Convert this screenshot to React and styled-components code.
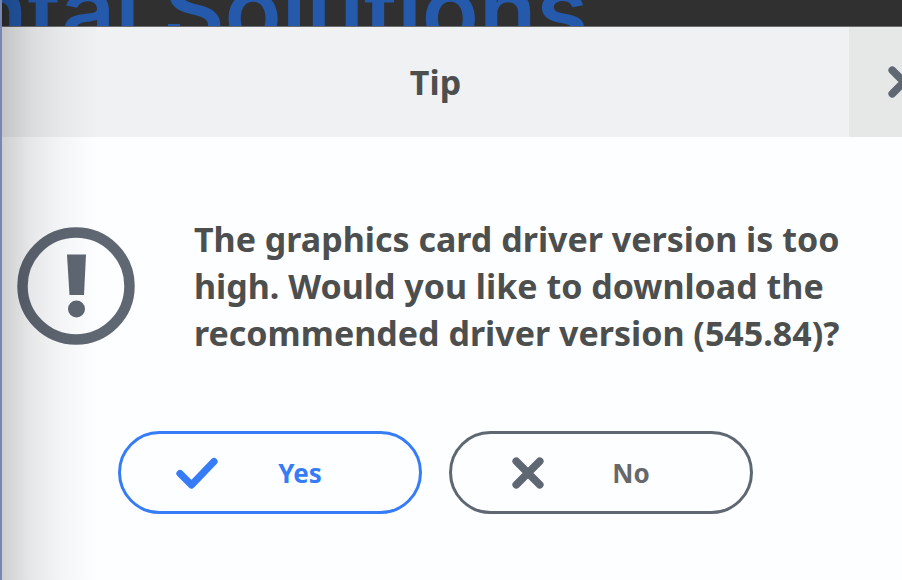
import React, { useState } from 'react';
import styled, { createGlobalStyle } from 'styled-components';

const GlobalStyle = createGlobalStyle`
  * {
    box-sizing: border-box;
  }
  body {
    margin: 0;
    background: #fdfeff;
    font-family: 'Noto Sans', 'Open Sans', sans-serif;
  }
`;

const Stage = styled('div')`
  position: relative;
  min-height: 100vh;
  overflow: hidden;
  display: flex;
  flex-direction: column;
  border-left: 2px solid #7886b4;
`;

const Banner = styled('div')`
  height: 27px;
  overflow: hidden;
  background: #303030;
  border-bottom: 1px solid #6b6c6d;
`;

const BannerText = styled('div')`
  margin: -42px 0 0 -32px;
  color: #2459ab;
  font-family: Inter, 'Liberation Sans', Arial, sans-serif;
  font-size: 94px;
  font-weight: 600;
  line-height: 104px;
  white-space: nowrap;
`;

/* the dialog is wider than the window and runs out on both sides */
const Dialog = styled('section')`
  flex: 1;
  margin: 0 -57px 0 -90px;
  background: #fdfeff;
  color: #4c4f4e;
`;

const DialogHeader = styled('header')`
  display: grid;
  grid-template-columns: 110px 1fr 110px;
  height: 110px;
  background: #eff1f3;
`;

const Title = styled('h1')`
  grid-column: 2;
  margin: 0;
  font-size: 34px;
  font-weight: 700;
  line-height: 110px;
  text-align: center;
`;

const CloseButton = styled('button')`
  display: flex;
  align-items: center;
  justify-content: center;
  padding: 0;
  border: 0;
  background: #e5e8e6;
  color: #5f6773;
  cursor: pointer;
`;

const MessageRow = styled('div')`
  display: flex;
  align-items: center;
  gap: 59px;
  padding: 79px 105px 0;
`;

const WarningIcon = styled('svg')`
  flex: none;
  width: 118px;
  height: 118px;
  overflow: visible;
`;

const Message = styled('p')`
  flex: 1;
  margin: 0;
  font-size: 34px;
  font-weight: 700;
  line-height: 47px;
`;

const ButtonRow = styled('div')`
  display: flex;
  justify-content: center;
  gap: 27px;
  padding: 74px 0 64px;
`;

const PillButton = styled('button')`
  display: grid;
  grid-template-columns: 44px 1fr;
  align-items: center;
  justify-items: center;
  width: 304px;
  height: 83px;
  padding: 0 38px 0 54px;
  border: 3px solid ${(props) => props.$line};
  border-radius: 42px;
  background: transparent;
  color: ${(props) => props.$line};
  font-family: inherit;
  font-size: 26px;
  font-weight: 700;
  cursor: pointer;
`;

const ButtonLabel = styled('span')`
  color: ${(props) => props.$color};
`;

const EdgeShadow = styled('div')`
  position: absolute;
  top: 0;
  bottom: 0;
  left: 0;
  width: 96px;
  background: linear-gradient(
    to right,
    rgba(0, 0, 0, 0.19),
    rgba(0, 0, 0, 0.09) 30%,
    rgba(0, 0, 0, 0.04) 60%,
    rgba(0, 0, 0, 0)
  );
  pointer-events: none;
`;

const CrossIcon = ({ size }) => (
  <svg width={size} height={size} viewBox="0 0 30 30" aria-hidden="true">
    <path
      d="M4 4 26 26M26 4 4 26"
      fill="none"
      stroke="currentColor"
      strokeWidth="7.2"
      strokeLinecap="round"
    />
  </svg>
);

const CheckIcon = () => (
  <svg width="44" height="32" viewBox="0 0 44 32" aria-hidden="true">
    <path
      d="M5 16.500 16.500 28 39 4.500"
      fill="none"
      stroke="currentColor"
      strokeWidth="7.2"
      strokeLinecap="round"
      strokeLinejoin="round"
    />
  </svg>
);

const App = () => {
  const [open, setOpen] = useState(true);

  const closeDialog = () => {
    setOpen(false);
  };

  return (
    <Stage>
      <GlobalStyle />
      <Banner>
        <BannerText>ntal Solutions</BannerText>
      </Banner>
      {open && (
        <Dialog role="dialog" aria-labelledby="tip-title">
          <DialogHeader>
            <Title id="tip-title">Tip</Title>
            <CloseButton type="button" aria-label="Close" onClick={closeDialog}>
              <CrossIcon size={32} />
            </CloseButton>
          </DialogHeader>
          <MessageRow>
            <WarningIcon viewBox="0 0 118 118" aria-hidden="true">
              <circle
                cx="59"
                cy="58"
                r="53.5"
                fill="none"
                stroke="#5f6773"
                strokeWidth="10.5"
              />
              <path d="M50 26.500H69L67 67H52.500Z" fill="#5f6773" />
              <circle cx="59.500" cy="81" r="8.500" fill="#5f6773" />
            </WarningIcon>
            <Message>
              The graphics card driver version is too high. Would you like to
              download the recommended driver version (545.84)?
            </Message>
          </MessageRow>
          <ButtonRow>
            <PillButton type="button" $line="#367cf6" onClick={closeDialog}>
              <CheckIcon />
              <ButtonLabel $color="#367cf6">Yes</ButtonLabel>
            </PillButton>
            <PillButton type="button" $line="#5f6773" onClick={closeDialog}>
              <CrossIcon size={32} />
              <ButtonLabel $color="#666869">No</ButtonLabel>
            </PillButton>
          </ButtonRow>
        </Dialog>
      )}
      <EdgeShadow />
    </Stage>
  );
};

export default App;
